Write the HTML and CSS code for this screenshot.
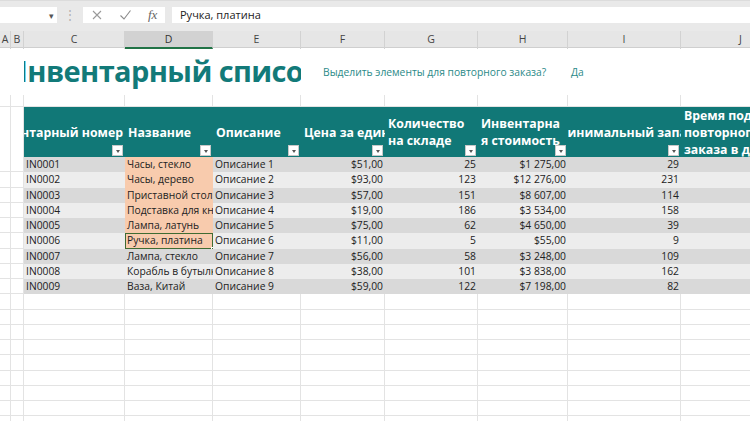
FILE: index.html
```html
<!DOCTYPE html>
<html lang="ru">
<head>
<meta charset="utf-8">
<link rel="stylesheet" href="styles.css">
</head>
<body>
<div class="app">
  <div class="fbar">
    <div class="namebox"><span class="caret">&#9662;</span></div>
    <div class="grip">&#8942;</div>
    <div class="fbtns">
      <svg class="ic" width="12" height="12" viewBox="0 0 12 12"><path d="M2 2L10 10M10 2L2 10" stroke="#9a9a9a" stroke-width="1.1" fill="none"/></svg>
      <svg class="ic" width="13" height="12" viewBox="0 0 13 12"><path d="M1.5 6.5L5 10L11.5 1.5" stroke="#8a8a8a" stroke-width="1.1" fill="none"/></svg>
      <span class="fx">fx</span>
    </div>
    <div class="formula">Ручка, платина</div>
  </div>

  <div class="colheads">
    <div class="ch">A</div><div class="ch">B</div><div class="ch">C</div><div class="ch sel">D</div><div class="ch">E</div><div class="ch">F</div><div class="ch">G</div><div class="ch">H</div><div class="ch">I</div><div class="ch">J</div>
  </div>

  <div class="sheet">
    <div class="row title-row">
      <div class="c"></div><div class="c"></div>
      <div class="title-cell"><span class="title">Инвентарный список</span></div>
      <div class="ask">Выделить элементы для повторного заказа?</div>
      <div class="yes">Да</div>
      <div class="c plain"></div>
    </div>
    <div class="row blank-row">
      <div class="c"></div><div class="c"></div><div class="c"></div><div class="c"></div><div class="c"></div><div class="c"></div><div class="c"></div><div class="c"></div><div class="c"></div><div class="c"></div>
    </div>
    <div class="row head-row">
      <div class="c"></div><div class="c"></div>
      <div class="h right"><span>Инвентарный номер</span><i class="dd"></i></div>
      <div class="h"><span>Название</span><i class="dd"></i></div>
      <div class="h"><span>Описание</span><i class="dd"></i></div>
      <div class="h"><span>Цена за единицу</span><i class="dd"></i></div>
      <div class="h"><span>Количество<br>на складе</span><i class="dd"></i></div>
      <div class="h"><span>Инвентарна<br>я стоимость</span><i class="dd"></i></div>
      <div class="h center"><span>Минимальный запас</span><i class="dd"></i></div>
      <div class="h"><span>Время подачи<br>повторного<br>заказа в днях</span></div>
    </div>

    <div class="row data dark"><div class="c"></div><div class="c"></div><div class="d">IN0001</div><div class="d peach">Часы, стекло</div><div class="d">Описание 1</div><div class="d num">$51,00</div><div class="d num">25</div><div class="d num">$1 275,00</div><div class="d num">29</div><div class="d"></div></div>
    <div class="row data light"><div class="c"></div><div class="c"></div><div class="d">IN0002</div><div class="d peach">Часы, дерево</div><div class="d">Описание 2</div><div class="d num">$93,00</div><div class="d num">123</div><div class="d num">$12 276,00</div><div class="d num">231</div><div class="d"></div></div>
    <div class="row data dark"><div class="c"></div><div class="c"></div><div class="d">IN0003</div><div class="d peach">Приставной стол</div><div class="d">Описание 3</div><div class="d num">$57,00</div><div class="d num">151</div><div class="d num">$8 607,00</div><div class="d num">114</div><div class="d"></div></div>
    <div class="row data light"><div class="c"></div><div class="c"></div><div class="d">IN0004</div><div class="d peach">Подставка для книг</div><div class="d">Описание 4</div><div class="d num">$19,00</div><div class="d num">186</div><div class="d num">$3 534,00</div><div class="d num">158</div><div class="d"></div></div>
    <div class="row data dark"><div class="c"></div><div class="c"></div><div class="d">IN0005</div><div class="d peach">Лампа, латунь</div><div class="d">Описание 5</div><div class="d num">$75,00</div><div class="d num">62</div><div class="d num">$4 650,00</div><div class="d num">39</div><div class="d"></div></div>
    <div class="row data light"><div class="c"></div><div class="c"></div><div class="d">IN0006</div><div class="d peach active">Ручка, платина<i class="handle"></i></div><div class="d">Описание 6</div><div class="d num">$11,00</div><div class="d num">5</div><div class="d num">$55,00</div><div class="d num">9</div><div class="d"></div></div>
    <div class="row data dark"><div class="c"></div><div class="c"></div><div class="d">IN0007</div><div class="d">Лампа, стекло</div><div class="d">Описание 7</div><div class="d num">$56,00</div><div class="d num">58</div><div class="d num">$3 248,00</div><div class="d num">109</div><div class="d"></div></div>
    <div class="row data light"><div class="c"></div><div class="c"></div><div class="d">IN0008</div><div class="d">Корабль в бутылке</div><div class="d">Описание 8</div><div class="d num">$38,00</div><div class="d num">101</div><div class="d num">$3 838,00</div><div class="d num">162</div><div class="d"></div></div>
    <div class="row data dark"><div class="c"></div><div class="c"></div><div class="d">IN0009</div><div class="d">Ваза, Китай</div><div class="d">Описание 9</div><div class="d num">$59,00</div><div class="d num">122</div><div class="d num">$7 198,00</div><div class="d num">82</div><div class="d"></div></div>

    <div class="row empty"><div class="c"></div><div class="c"></div><div class="c"></div><div class="c"></div><div class="c"></div><div class="c"></div><div class="c"></div><div class="c"></div><div class="c"></div><div class="c"></div></div>
    <div class="row empty"><div class="c"></div><div class="c"></div><div class="c"></div><div class="c"></div><div class="c"></div><div class="c"></div><div class="c"></div><div class="c"></div><div class="c"></div><div class="c"></div></div>
    <div class="row empty"><div class="c"></div><div class="c"></div><div class="c"></div><div class="c"></div><div class="c"></div><div class="c"></div><div class="c"></div><div class="c"></div><div class="c"></div><div class="c"></div></div>
    <div class="row empty"><div class="c"></div><div class="c"></div><div class="c"></div><div class="c"></div><div class="c"></div><div class="c"></div><div class="c"></div><div class="c"></div><div class="c"></div><div class="c"></div></div>
    <div class="row empty"><div class="c"></div><div class="c"></div><div class="c"></div><div class="c"></div><div class="c"></div><div class="c"></div><div class="c"></div><div class="c"></div><div class="c"></div><div class="c"></div></div>
    <div class="row empty"><div class="c"></div><div class="c"></div><div class="c"></div><div class="c"></div><div class="c"></div><div class="c"></div><div class="c"></div><div class="c"></div><div class="c"></div><div class="c"></div></div>
    <div class="row empty"><div class="c"></div><div class="c"></div><div class="c"></div><div class="c"></div><div class="c"></div><div class="c"></div><div class="c"></div><div class="c"></div><div class="c"></div><div class="c"></div></div>
    <div class="row empty"><div class="c"></div><div class="c"></div><div class="c"></div><div class="c"></div><div class="c"></div><div class="c"></div><div class="c"></div><div class="c"></div><div class="c"></div><div class="c"></div></div>
    <div class="row empty"><div class="c"></div><div class="c"></div><div class="c"></div><div class="c"></div><div class="c"></div><div class="c"></div><div class="c"></div><div class="c"></div><div class="c"></div><div class="c"></div></div>
  </div>
</div>
</body>
</html>
```

FILE: styles.css
```css
* { box-sizing: border-box; }
html, body { margin: 0; padding: 0; }
body {
  width: 750px;
  height: 421px;
  overflow: hidden;
  background: #fff;
  font-family: "Open Sans", "Noto Sans", sans-serif;
  color: #222;
}
.app {
  --cols: 11px 13px 101px 88px 88px 84px 93px 90px 113px 120px;
  width: 750px;
  height: 421px;
  overflow: hidden;
}

/* formula bar */
.fbar {
  height: 31px;
  background: #e9e9e9;
  border-top: 1px solid #dcdcdc;
  padding-top: 6px;
  display: flex;
  align-items: flex-start;
}
.namebox {
  width: 57px;
  height: 16px;
  background: #fff;
  display: flex;
  justify-content: flex-end;
  align-items: center;
  padding-right: 3px;
}
.caret { font-size: 9px; color: #555; line-height: 1; }
.grip {
  width: 26px;
  height: 16px;
  text-align: center;
  color: #b0b0b0;
  font-size: 12px;
  line-height: 16px;
}
.fbtns {
  width: 82px;
  height: 16px;
  background: #fff;
  display: flex;
  align-items: center;
  padding-left: 8px;
  gap: 16px;
}
.fx {
  font-family: "Liberation Serif", serif;
  font-style: italic;
  font-size: 13px;
  color: #666;
  line-height: 16px;
}
.formula {
  margin-left: 7px;
  flex: 1;
  height: 16px;
  background: #fff;
  font-size: 11px;
  line-height: 16px;
  padding-left: 8px;
  color: #222;
}

/* column headers */
.colheads {
  display: grid;
  grid-template-columns: var(--cols);
  height: 17px;
  background: #e6e6e6;
  border-bottom: 1px solid #cfcfcf;
}
.ch {
  font-size: 10.5px;
  color: #444;
  text-align: center;
  line-height: 16px;
  border-right: 1px solid #d2d2d2;
}
.ch.sel {
  background: #d2d2d2;
  border-bottom: 2px solid #217346;
  color: #333;
}

/* sheet */
.sheet { width: 750px; }
.row {
  display: grid;
  grid-template-columns: var(--cols);
}
.c {
  border-right: 1px solid #e3e3e3;
  border-bottom: 1px solid #e3e3e3;
}
.title-row { height: 47px; }
.title-row .c { border: none; }
.title-cell {
  grid-column: 3 / 6;
  overflow: hidden;
  display: flex;
  align-items: center;
  white-space: nowrap;
}
.title {
  font-family: "Open Sans", sans-serif;
  font-weight: 700;
  font-size: 29px;
  letter-spacing: -0.6px;
  color: #127a79;
  margin-left: -20px;
  padding-bottom: 2px;
}
.ask {
  grid-column: 6 / 9;
  display: flex;
  align-items: center;
  padding-left: 22px;
  font-size: 10.3px;
  color: #2b8a88;
  white-space: nowrap;
}
.yes {
  grid-column: 9 / 10;
  display: flex;
  align-items: center;
  padding-left: 3px;
  font-size: 10.3px;
  color: #2b8a88;
}
.blank-row { height: 12px; }

.head-row { height: 50px; }
.head-row .c { border-bottom: none; }
.h {
  position: relative;
  background: #117877;
  color: #fff;
  font-weight: 700;
  font-size: 12.3px;
  line-height: 17px;
  display: flex;
  align-items: center;
  padding: 0 3px;
  overflow: hidden;
  white-space: nowrap;
}
.h.right { justify-content: flex-end; padding-right: 2px; }
.h.center { justify-content: center; }
.dd {
  position: absolute;
  right: 2px;
  bottom: 1px;
  width: 11px;
  height: 11px;
  background: #fff;
  border: 1px solid #c8c8c8;
}
.dd::after {
  content: "";
  position: absolute;
  left: 2.5px;
  top: 3.5px;
  border-left: 2.5px solid transparent;
  border-right: 2.5px solid transparent;
  border-top: 3px solid #555;
}

.data { height: 15.25px; }
.data.dark .d { background: #d9d9d9; }
.data.light .d { background: #ededed; }
.data .c { background: #fff; }
.d {
  font-size: 10.3px;
  line-height: 15px;
  padding: 0 2px;
  white-space: nowrap;
  overflow: hidden;
  position: relative;
}
.d.num { text-align: right; }
.data .d.peach { background: #f8cbad; }
.d.active {
  border: 1.5px solid #3f6b32;
  line-height: 12px;
  padding-left: 1px;
  overflow: visible;
}
.handle {
  position: absolute;
  right: -3px;
  bottom: -3px;
  width: 4px;
  height: 4px;
  background: #3f6b32;
  border: 1px solid #fff;
}
.empty { height: 15.25px; }
```
